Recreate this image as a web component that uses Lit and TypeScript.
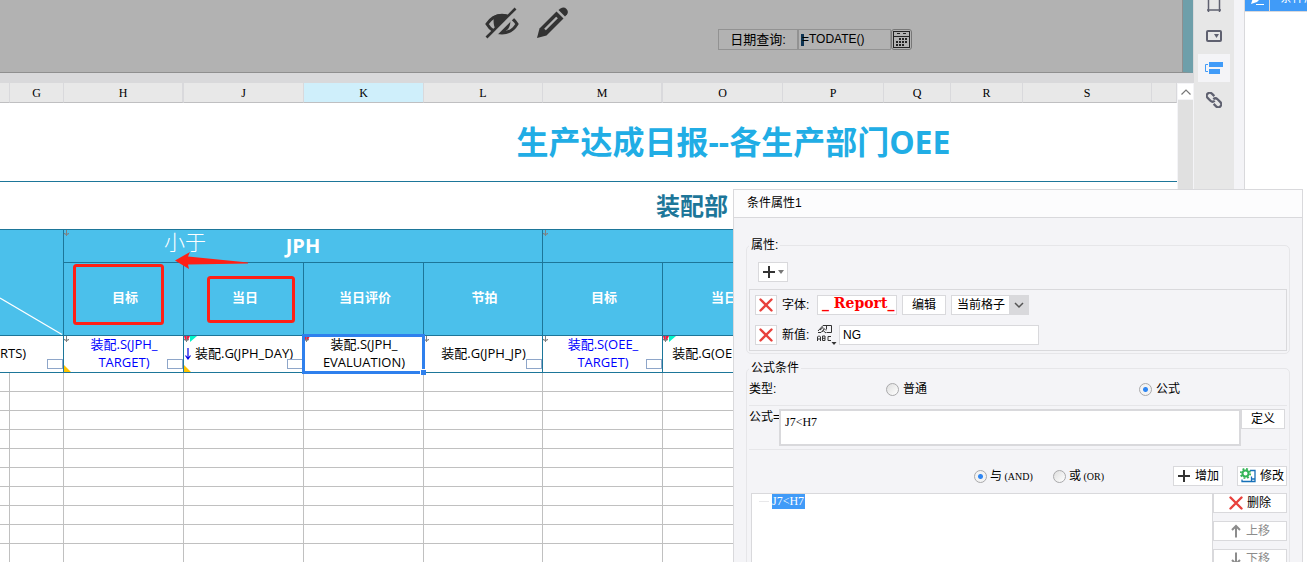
import { LitElement, html, css, svg, nothing } from "lit";
import { customElement } from "lit/decorators.js";
import { classMap } from "lit/directives/class-map.js";

interface Column {
  name: string;
  width?: number;
  active?: boolean;
  hiddenNext?: boolean;
}

interface DataCell {
  lines: string[];
  span?: number;
  blue?: boolean;
  arrow?: "gray" | "red";
  cyan?: boolean;
  expand?: boolean;
  yellow?: boolean;
  box?: boolean;
  selected?: boolean;
  start?: boolean;
}

const COLUMNS: Column[] = [
  { name: "", width: 10 },
  { name: "G", width: 54 },
  { name: "H", width: 120, hiddenNext: true },
  { name: "J", width: 120 },
  { name: "K", width: 120, active: true },
  { name: "L", width: 119 },
  { name: "M", width: 120, hiddenNext: true },
  { name: "O", width: 120 },
  { name: "P", width: 101 },
  { name: "Q", width: 67 },
  { name: "R", width: 72 },
  { name: "S", width: 129 },
  { name: "" },
];

const SUBHEADS = ["目标", "当日", "当日评价", "节拍", "目标", "当日", "", "", "", "", ""];

const DATA: DataCell[] = [
  { lines: ["RTS)"], span: 2, box: true, start: true },
  { lines: ["装配.S(JPH_", "TARGET)"], blue: true, arrow: "gray", yellow: true, box: true },
  { lines: ["装配.G(JPH_DAY)"], arrow: "red", cyan: true, expand: true, yellow: true, box: true },
  { lines: ["装配.S(JPH_", "EVALUATION)"], arrow: "red", selected: true },
  { lines: ["装配.G(JPH_JP)"], arrow: "gray", box: true },
  { lines: ["装配.S(OEE_", "TARGET)"], blue: true, arrow: "gray", box: true },
  { lines: ["装配.G(OEE_DAY)"], arrow: "red", cyan: true },
  { lines: [] },
  { lines: [] },
  { lines: [] },
  { lines: [] },
  { lines: [] },
];

const BLANK_ROWS = 10;

const downMark = (color: string) => svg`
  <path d="M2.500 0v6M0.500 3v1h4v-1M1.500 4.500h2" fill="none" stroke=${color} stroke-width="1"/>`;

const crossIcon = html`<svg width="14" height="14" viewBox="0 0 14 14" aria-hidden="true">
  <path d="M1.500 1.500 12.500 12.500M12.500 1.500 1.500 12.500" stroke="#e8413c" stroke-width="2.400" stroke-linecap="round"/>
</svg>`;

const plusIcon = html`<svg width="14" height="14" viewBox="0 0 14 14" aria-hidden="true">
  <path d="M7 1v12M1 7h12" stroke="#333" stroke-width="2"/>
</svg>`;

@customElement("report-sheet")
export class ReportSheet extends LitElement {
  static styles = css`
    :host {
      display: block;
      position: relative;
      background: #fff;
      overflow: hidden;
      font-family: "Open Sans", "Noto Sans CJK SC", sans-serif;
      font-size: 13px;
      line-height: 18px;
      color: #000;
    }
    table {
      width: 100%;
      table-layout: fixed;
      border-collapse: separate;
      border-spacing: 0;
    }
    th,
    td {
      padding: 0;
      box-sizing: border-box;
      position: relative;
      border: 0 solid #1d7699;
      border-width: 0 1px 1px 0;
      font-weight: 400;
    }
    .letters th {
      height: 20px;
      background: #e8e8e8;
      border-color: #d9d9dc;
      border-bottom-color: #bfbfc1;
      font: 400 12px/17px "Liberation Serif", serif;
      color: #000;
      padding-top: 2px;
    }
    .letters th.active {
      background: #cfeffb;
    }
    .letters th.hidden-next {
      border-right-width: 2px;
    }
    .title td {
      height: 79px;
      border-right: 0;
      padding-left: 290px;
      text-align: center;
      font-size: 32px;
      line-height: 40px;
      font-weight: 700;
      color: #21ade5;
    }
    .section td {
      height: 48px;
      border-right: 0;
      padding-left: 656px;
      text-align: left;
      font-size: 24px;
      line-height: 32px;
      font-weight: 700;
      color: #1d7699;
    }
    .groups th {
      height: 33px;
      background: #4bc0eb;
      color: #fff;
      font-size: 20px;
      line-height: 24px;
      font-weight: 700;
    }
    .subheads th {
      height: 73px;
      background: #4bc0eb;
      color: #fff;
      font-size: 13px;
      font-weight: 700;
      padding: 0 0 4px 3px;
    }
    .data td {
      height: 37px;
      text-align: center;
      padding-left: 1px;
    }
    .data td.start {
      text-align: left;
      padding-left: 0;
    }
    .data td.blue {
      color: #00f;
    }
    .blank td {
      height: 19px;
      border-color: #c0c0c0;
    }
    .line {
      display: block;
      white-space: nowrap;
    }
    .line:first-child {
      margin-top: -3px;
    }
    .mark,
    .diagonal,
    .corner,
    .expand {
      position: absolute;
      left: 0;
      top: 0;
      display: block;
    }
    .diagonal {
      width: 100%;
      height: 100%;
    }
    .corner {
      top: auto;
      bottom: 0;
    }
    .expand {
      left: 1px;
      top: 12px;
    }
    .handle {
      position: absolute;
      right: 0;
      bottom: 3px;
      width: 16px;
      height: 10px;
      box-sizing: border-box;
      border: 1px solid #8ea6c9;
      background: #fff8;
    }
    .selection {
      position: absolute;
      inset: -2px;
      border: 3px solid #2f80ed;
      z-index: 1;
    }
    .selection::after {
      content: "";
      position: absolute;
      right: -4px;
      bottom: -4px;
      width: 5px;
      height: 5px;
      background: #2f80ed;
      border: 1px solid #fff;
      border-width: 1px 0 0 1px;
    }
    .note,
    .note-text {
      position: absolute;
      pointer-events: none;
      z-index: 2;
    }
    .note {
      left: 70px;
      top: 160px;
    }
    .note-text {
      left: 164px;
      top: 144px;
      font: 300 21px/28px "Noto Sans CJK SC", sans-serif;
      color: #fff;
    }
  `;

  private renderCell(cell: DataCell) {
    return html`<td
      colspan=${cell.span ?? 1}
      class=${classMap({ blue: !!cell.blue, start: !!cell.start })}
    >
      ${cell.lines.map((l) => html`<span class="line">${l}</span>`)}
      ${cell.arrow
        ? html`<svg class="mark" width="14" height="7" viewBox="0 0 14 7">
            ${cell.arrow === "red" ? svg`<path d="M0 0h6L4 4H1z" fill="#f5173f"/>` : nothing}
            ${cell.cyan ? svg`<path d="M6 0h7L6 6z" fill="#00f5c8"/>` : nothing}
            ${downMark("#808080")}
          </svg>`
        : nothing}
      ${cell.expand
        ? html`<svg class="expand" width="6" height="12" viewBox="0 0 6 12">
            <path d="M3 0v11M0.500 7.500 3 11 5.500 7.500" fill="none" stroke="#0000e6" stroke-width="1.200"/>
          </svg>`
        : nothing}
      ${cell.yellow
        ? html`<svg class="corner" width="7" height="7" viewBox="0 0 7 7">
            <path d="M0 0 7 7H0z" fill="#ffc400"/>
          </svg>`
        : nothing}
      ${cell.box ? html`<span class="handle"></span>` : nothing}
      ${cell.selected ? html`<span class="selection"></span>` : nothing}
    </td>`;
  }

  private groupMark() {
    return html`<svg class="mark" width="14" height="7" viewBox="0 0 14 7">${downMark("#808080")}</svg>`;
  }

  render() {
    return html`
      <table>
        <colgroup>
          ${COLUMNS.map((c) => html`<col width=${c.width ?? nothing} />`)}
        </colgroup>
        <thead>
          <tr class="letters">
            ${COLUMNS.map(
              (c) => html`<th class=${classMap({ active: !!c.active, "hidden-next": !!c.hiddenNext })}>${c.name}</th>`
            )}
          </tr>
        </thead>
        <tbody>
          <tr class="title">
            <td colspan="13">生产达成日报--各生产部门OEE</td>
          </tr>
          <tr class="section">
            <td colspan="13">装配部</td>
          </tr>
          <tr class="groups">
            <th colspan="2" rowspan="2">
              <svg class="diagonal" viewBox="0 0 63 105" preserveAspectRatio="none">
                <path d="M0 68 62 104.500" stroke="#fff" stroke-width="1.200" />
              </svg>
            </th>
            <th colspan="4">${this.groupMark()}JPH</th>
            <th colspan="7">${this.groupMark()}</th>
          </tr>
          <tr class="subheads">
            ${SUBHEADS.map((s) => html`<th>${s}</th>`)}
          </tr>
          <tr class="data">
            ${DATA.map((c) => this.renderCell(c))}
          </tr>
          ${Array.from(
            { length: BLANK_ROWS },
            () => html`<tr class="blank">${COLUMNS.map(() => html`<td></td>`)}</tr>`
          )}
        </tbody>
      </table>
      <svg class="note" width="230" height="85" viewBox="0 0 230 85" aria-hidden="true">
        <g fill="none" stroke="#ff2015" stroke-width="3">
          <rect x="4.500" y="22.500" width="88" height="58" rx="2" />
          <rect x="138.500" y="34.500" width="85" height="44" rx="2" />
        </g>
        <path d="M105 17.500 120 9 118 13.500 178 19.500 178 20.500 118 21.500 119 26z" fill="#ff2015" />
      </svg>
      <span class="note-text">小于</span>
    `;
  }
}

@customElement("condition-dialog")
export class ConditionDialog extends LitElement {
  static styles = css`
    :host {
      display: block;
      box-sizing: border-box;
      background: #f4f4f7;
      border: 1px solid #d9d9dc;
      overflow: hidden;
      font: 12px/16px "Liberation Sans", "Noto Sans CJK SC", sans-serif;
      color: #000;
    }
    header {
      height: 27px;
      line-height: 26px;
      padding-left: 13px;
      background: #fcfcfd;
      border-bottom: 1px solid #d9d9dc;
    }
    h2 {
      margin: 0;
      font: inherit;
    }
    .body {
      padding: 19px 12px 0;
    }
    fieldset {
      margin: 0 0 6px;
      min-width: 0;
      border: 1px solid #e6e6e9;
      border-radius: 5px;
      padding: 0 2px 2px;
    }
    legend {
      padding: 0 2px;
    }
    button,
    input,
    textarea,
    select {
      font: inherit;
      color: inherit;
      margin: 0;
      box-sizing: border-box;
    }
    button,
    .sample,
    select,
    .value {
      height: 20px;
      border: 1px solid #d9d9dc;
      border-radius: 0;
      background: #fff;
      padding: 0;
    }
    button {
      display: inline-flex;
      align-items: center;
      justify-content: center;
      gap: 4px;
      white-space: nowrap;
    }
    button:disabled {
      color: #8c8c8c;
    }
    .add {
      display: flex;
      width: 30px;
      margin: 9px 0 7px 9px;
      gap: 2px;
    }
    .props {
      display: flex;
      flex-direction: column;
      gap: 10px;
      border: 1px solid #d9d9dc;
      padding: 5px;
    }
    .row {
      display: flex;
      align-items: center;
      height: 20px;
    }
    .remove {
      width: 22px;
      margin-right: 5px;
    }
    .caption {
      width: 35px;
    }
    .sample {
      box-sizing: border-box;
      width: 80px;
      line-height: 14px;
      padding-left: 4px;
      overflow: hidden;
      white-space: nowrap;
      color: #f00;
      font-family: "DejaVu Serif", serif;
      font-weight: 700;
      font-size: 14px;
      margin-right: 5px;
    }
    .edit {
      width: 44px;
      margin-right: 5px;
    }
    .combo {
      display: grid;
      width: 78px;
    }
    .combo > * {
      grid-area: 1 / 1;
    }
    .combo select {
      appearance: none;
      width: 100%;
      padding-left: 5px;
    }
    .combo svg {
      justify-self: end;
      pointer-events: none;
    }
    .value {
      width: 200px;
      padding: 0 3px;
      margin-left: 2px;
    }
    .kinds {
      display: grid;
      grid-template-columns: 137px 253px 1fr;
      align-items: center;
      height: 26px;
      padding-bottom: 3px;
      border-bottom: 1px solid #e6e6e9;
    }
    .choice {
      display: flex;
      align-items: center;
      gap: 4px;
    }
    .latin {
      font-family: "Liberation Serif", serif;
      font-size: 10px;
    }
    input[type="radio"] {
      appearance: none;
      width: 13px;
      height: 13px;
      border: 1px solid #a9a9ab;
      border-radius: 50%;
      background: linear-gradient(135deg, #dedede, #fff);
    }
    input[type="radio"]:checked {
      background: radial-gradient(circle, #2f86f2 0 2px, #f3f3f3 3px);
    }
    .formula {
      display: flex;
      align-items: flex-start;
      padding: 3px 2px 3px 0;
      border-bottom: 1px solid #e6e6e9;
    }
    .formula label {
      width: 30px;
      white-space: nowrap;
    }
    .formula textarea {
      display: block;
      flex: 1;
      min-width: 0;
      height: 37px;
      resize: none;
      border: 2px solid #d9d9dc;
      background: #fff;
      padding: 3px 4px;
      font-family: "Liberation Serif", serif;
    }
    .define {
      width: 44px;
    }
    .joiner {
      display: flex;
      align-items: center;
      margin: 16px 0 7px;
      padding-left: 225px;
    }
    .joiner .choice {
      width: 79px;
      gap: 3px;
    }
    .small {
      width: 50px;
    }
    .small:first-of-type {
      margin: 0 14px 0 auto;
    }
    .list {
      display: flex;
      padding-left: 2px;
    }
    .tree {
      flex: 1;
      min-height: 140px;
      margin: 0;
      box-sizing: border-box;
      padding: 0 0 0 7px;
      border: 1px solid #d9d9dc;
      background: #fff;
      list-style: none;
    }
    .tree li {
      display: flex;
      align-items: center;
      gap: 3px;
    }
    .tree li::before {
      content: "";
      width: 10px;
      height: 1px;
      background: #e8e8ea;
    }
    .tree span {
      height: 15px;
      line-height: 15px;
      padding-right: 1px;
      background: #409bf8;
      color: #fff;
      font-family: "Liberation Serif", serif;
    }
    .actions {
      display: flex;
      flex-direction: column;
      gap: 8px;
      width: 74px;
    }
  `;

  render() {
    return html`
      <header><h2>条件属性1</h2></header>
      <div class="body">
        <fieldset>
          <legend>属性:</legend>
          <button class="add" type="button" aria-label="添加属性">
            ${plusIcon}
            <svg width="6" height="4" viewBox="0 0 6 4"><path d="M0 0h6L3 4z" fill="#777" /></svg>
          </button>
          <div class="props">
            <div class="row">
              <button class="remove" type="button" aria-label="删除字体">${crossIcon}</button>
              <span class="caption">字体:</span>
              <div class="sample">_ Report_</div>
              <button class="edit" type="button">编辑</button>
              <span class="combo">
                <select aria-label="范围">
                  <option>当前格子</option>
                </select>
                <svg width="20" height="20" viewBox="0 0 20 20">
                  <path d="M0 0h20v20H0z" fill="#d9d9dc" />
                  <path d="M6 8l4 4 4-4" fill="none" stroke="#555" stroke-width="1.500" />
                </svg>
              </span>
            </div>
            <div class="row">
              <button class="remove" type="button" aria-label="删除新值">${crossIcon}</button>
              <label class="caption" for="value">新值:</label>
              <svg width="20" height="20" viewBox="0 0 20 20" fill="none" stroke="#333">
                <path d="M6 .5h8.500v7H9.500M9.500 .5v4M6 .5 1 6M1 7.500h3l2-2 3 2.500M3 5l3-2.500 3 3M5 7l2-3" />
                <path d="M.5 16v-4l1-1h1l1 1v4M.5 14h3M5.500 11v4.500h2.500v-4.500H5.500M5.500 13.300h2.500M14 11.500h-3v4h3" />
                <path d="M14.500 17h5L17 20z" fill="#333" stroke="none" />
              </svg>
              <input class="value" id="value" type="text" value="NG" />
            </div>
          </div>
        </fieldset>
        <fieldset>
          <legend>公式条件</legend>
          <div class="kinds">
            <span>类型:</span>
            <label class="choice"><input type="radio" name="kind" />普通</label>
            <label class="choice"><input type="radio" name="kind" checked />公式</label>
          </div>
          <div class="formula">
            <label for="formula">公式=</label>
            <textarea id="formula" .value=${"J7<H7"}></textarea>
            <button class="define" type="button">定义</button>
          </div>
          <div class="joiner">
            <label class="choice"
              ><input type="radio" name="joiner" checked /><span>与<span class="latin"> (AND)</span></span></label
            >
            <label class="choice"
              ><input type="radio" name="joiner" /><span>或<span class="latin"> (OR)</span></span></label
            >
            <button class="small" type="button">${plusIcon}增加</button>
            <button class="small" type="button">
              <svg width="16" height="16" viewBox="0 0 16 16" aria-hidden="true">
                <path d="M10 2.500h5v11H2v-2M11.500 8.500v5M11.500 11h3" fill="none" stroke="#1670b8" stroke-width="1.300" />
                <circle cx="5.500" cy="5.500" r="3" fill="#fff" stroke="#35b558" stroke-width="2" />
                <circle cx="5.500" cy="5.500" r="4.700" fill="none" stroke="#35b558" stroke-width="1.800" stroke-dasharray="1.850 1.850" />
              </svg>
              修改
            </button>
          </div>
          <div class="list">
            <ul class="tree">
              <li><span>J7&lt;H7</span></li>
            </ul>
            <div class="actions">
              <button type="button">${crossIcon}删除</button>
              <button type="button" disabled>
                <svg width="12" height="14" viewBox="0 0 12 14">
                  <path d="M6 13.500V2M2 6l4-4 4 4" fill="none" stroke="#8c8c8c" stroke-width="2" /></svg
                >上移
              </button>
              <button type="button" disabled>
                <svg width="12" height="14" viewBox="0 0 12 14">
                  <path d="M6 .5V12M2 8l4 4 4-4" fill="none" stroke="#8c8c8c" stroke-width="2" /></svg
                >下移
              </button>
            </div>
          </div>
        </fieldset>
      </div>
    `;
  }
}

@customElement("app-root")
export class AppRoot extends LitElement {
  static styles = css`
    :host {
      display: grid;
      grid-template-columns: 1fr 40px 10px 63px;
      position: relative;
      height: 100vh;
      overflow: hidden;
      background: #f4f4f7;
      font: 12px/16px "Liberation Sans", "Noto Sans CJK SC", sans-serif;
      color: #000;
    }
    main {
      display: flex;
      flex-direction: column;
      min-width: 0;
      min-height: 0;
      background: #d9d9db;
    }
    .preview {
      display: flex;
      align-items: flex-start;
      box-sizing: border-box;
      height: 73px;
      margin-right: 1px;
      padding: 7px 0 0 485px;
      background: #b2b2b2;
      border-right: 10px solid #6e9faa;
      border-bottom: 1px solid #8f8f8f;
      box-shadow: inset -1px 0 #8f8f8f;
    }
    .preview > svg {
      flex: none;
      margin-right: 18px;
    }
    .query {
      display: flex;
      margin: 22px 0 0 131px;
    }
    .query label,
    .query input,
    .query button {
      box-sizing: border-box;
      height: 21px;
      border: 1px solid #929292;
      background: #b2b2b2;
      font: inherit;
      color: #000;
      margin: 0;
    }
    .query label {
      width: 80px;
      text-align: center;
      line-height: 20px;
      font-size: 13px;
    }
    .query input {
      width: 93px;
      padding: 0 0 2px 3px;
      background: linear-gradient(#0d3353, #0d3353) 2px 4px / 3px 12px no-repeat #b2b2b2;
    }
    .query button {
      width: 21px;
      padding: 0;
      border-color: #777;
      border-radius: 3px;
      display: grid;
      place-items: center;
    }
    .sheet {
      display: grid;
      grid-template-columns: 1fr 17px;
      flex: 1;
      min-height: 0;
      margin-top: 10px;
    }
    .scroll {
      display: flex;
      flex-direction: column;
      background: #f4f4f7;
      padding: 1px 1px 0;
    }
    .scroll button {
      height: 15px;
      padding: 0;
      border: 0;
      background: #fff;
      display: grid;
      place-items: center;
    }
    .thumb {
      flex: 1;
      margin-top: 1px;
      background: #e0e0e0;
    }
    nav {
      display: flex;
      flex-direction: column;
      align-items: center;
      gap: 4px;
      margin-top: -10px;
      background: #e7e7e7;
    }
    nav button {
      width: 32px;
      height: 28px;
      flex: none;
      padding: 0;
      border: 0;
      background: none;
      display: grid;
      place-items: center;
    }
    nav .on {
      background: #f4f4f7;
    }
    aside {
      grid-column: 4;
      border-left: 1px solid #d9d9dc;
      background: #fff;
      overflow: hidden;
    }
    .tab {
      display: flex;
      align-items: center;
      height: 26px;
      margin-top: -15px;
      background: #409bf8;
      border-bottom: 1px solid #d9d9dc;
      color: #fff;
      white-space: nowrap;
    }
    .tab span:first-child {
      display: grid;
      place-items: center;
      flex: none;
      width: 24px;
      height: 100%;
      border-right: 1px solid #d9d9dc;
    }
    .tab span:last-child {
      padding-left: 10px;
    }
    condition-dialog {
      position: absolute;
      top: 189px;
      right: 4px;
      bottom: 0;
      width: 570px;
      border-bottom: 0;
      z-index: 3;
    }
  `;

  render() {
    return html`
      <main>
        <section class="preview">
          <svg width="34" height="32" viewBox="0 0 34 32" aria-hidden="true">
            <path d="M2 17C9 5.500 25 5.500 32 17 25 29 9 29 2 17z" fill="none" stroke="#333" stroke-width="3" />
            <path d="M9 9C7 21 12 25 17 25s10-5 8-16C20 6 14 6 9 9z" fill="#333" />
            <path d="M3 33 33 3" stroke="#b2b2b2" stroke-width="6" />
            <path d="M1.500 30.500 30.500 1.500" stroke="#333" stroke-width="2.600" />
          </svg>
          <svg width="32" height="32" viewBox="0 0 32 32" aria-hidden="true">
            <path d="M0 31 2.500 21.500 19.500 4.500 26.500 11.500 9.500 28.500z" fill="#333" />
            <path d="M8 22.500 20 10.500" stroke="#b2b2b2" stroke-width="2.400" />
            <path d="M21.500 3 23.500 1.500Q27-.5 29.500 2T30 7.500L28 9.500z" fill="#333" />
          </svg>
          <div class="query">
            <label for="date">日期查询:</label>
            <input id="date" type="text" value="=TODATE()" />
            <button type="button" aria-label="选择日期">
              <svg width="17" height="17" viewBox="0 0 17 17">
                <rect x=".5" y=".5" width="16" height="16" fill="none" stroke="#222" />
                <path d="M1 5.500h15M4 2.500h3M10 2.500h3" stroke="#222" />
                <path d="M6 8h9M3 11h12M3 14h9" stroke="#222" stroke-width="2" stroke-dasharray="2 1" />
              </svg>
            </button>
          </div>
        </section>
        <div class="sheet">
          <report-sheet></report-sheet>
          <div class="scroll">
            <button type="button" aria-label="向上滚动">
              <svg width="10" height="6" viewBox="0 0 10 6">
                <path d="M.5 5.500 5 1l4.500 4.500" fill="none" stroke="#777" stroke-width="1.200" />
              </svg>
            </button>
            <div class="thumb"></div>
          </div>
        </div>
      </main>
      <nav aria-label="属性面板">
        <button type="button" aria-label="单元格">
          <svg width="16" height="16" viewBox="0 0 16 16">
            <path d="M2.500 0v16M13.500 0v16M1 14h14M1 2h14" stroke="#5f6170" stroke-width="1.500" fill="none" />
          </svg>
        </button>
        <button type="button" aria-label="控件">
          <svg width="16" height="12" viewBox="0 0 16 12">
            <rect x="1" y="1" width="14" height="10" rx="1" fill="none" stroke="#5f6170" stroke-width="2" />
            <path d="M8 4h5l-2.500 4z" fill="#5f6170" />
          </svg>
        </button>
        <button class="on" type="button" aria-label="条件属性">
          <svg width="18" height="12" viewBox="0 0 18 12">
            <path d="M4 0h14v5H4zM4 7h11v5H4z" fill="#409bf8" />
            <path d="M3 2.500H.5v7H3" fill="none" stroke="#409bf8" />
          </svg>
        </button>
        <button type="button" aria-label="超链接">
          <svg width="16" height="16" viewBox="0 0 16 16" fill="none" stroke="#5f6170" stroke-width="2.200">
            <g transform="rotate(45 8 8)">
              <path d="M5.500 5H2a3 3 0 0 0 0 6h4a3 3 0 0 0 3-3" />
              <path d="M10.500 11H14a3 3 0 0 0 0-6h-4a3 3 0 0 0-3 3" />
            </g>
          </svg>
        </button>
      </nav>
      <aside>
        <div class="tab">
          <span>
            <svg width="14" height="14" viewBox="0 0 14 14">
              <path d="M1 13 3 7 9 1l4 4-6 6z" fill="#fff" />
              <path d="M6 13.500h8" stroke="#fff" />
            </svg>
          </span>
          <span>条件属性</span>
        </div>
      </aside>
      <condition-dialog></condition-dialog>
    `;
  }
}
